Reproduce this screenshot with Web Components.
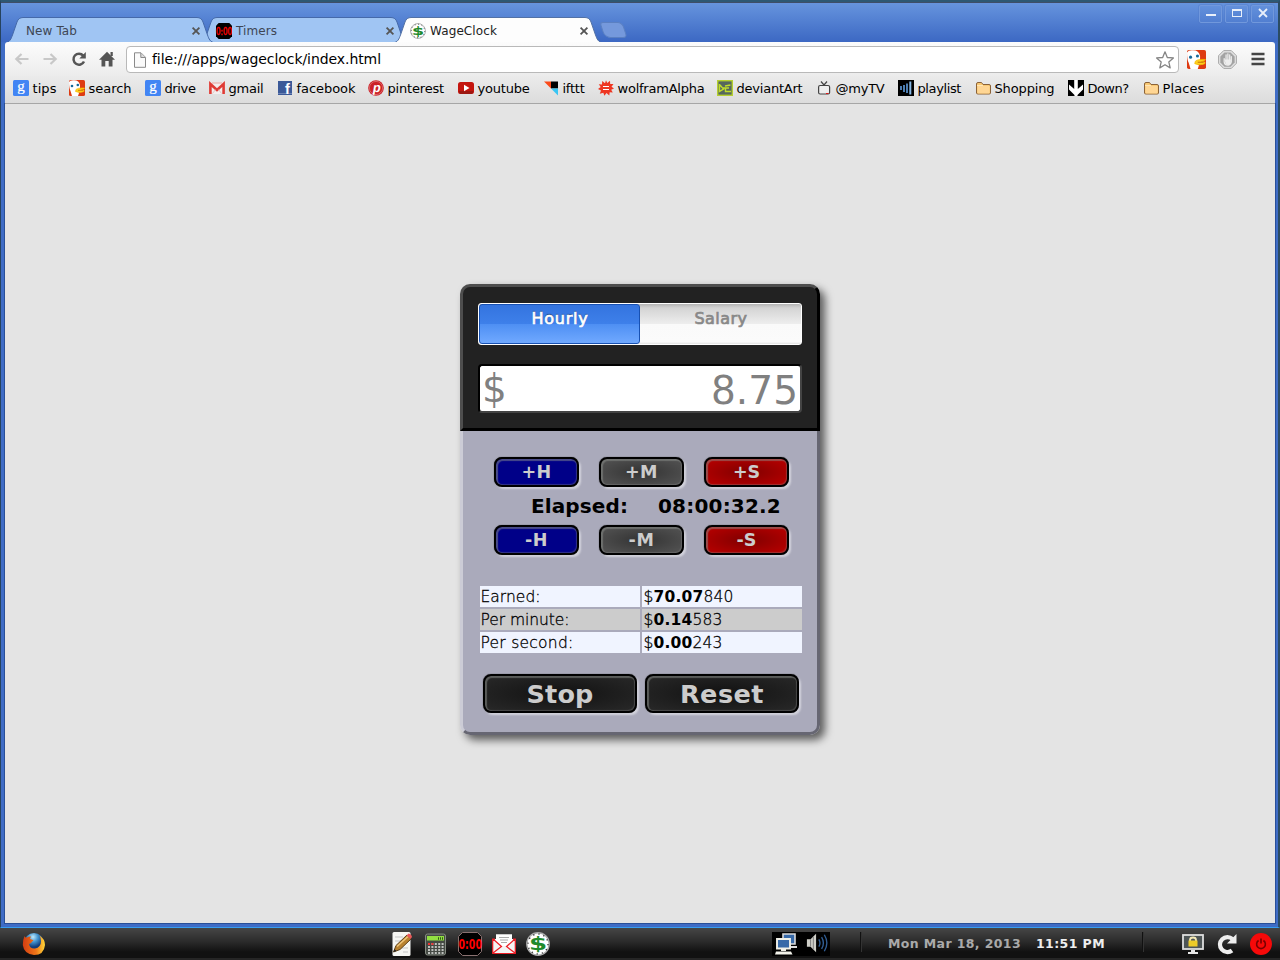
<!DOCTYPE html>
<html lang="en">
<head>
<meta charset="utf-8">
<title>WageClock</title>
<style>
html,body{margin:0;padding:0}
body{width:1280px;height:960px;overflow:hidden;background:#222;font-family:"DejaVu Sans",Verdana,sans-serif;color:#000}
</style>
</head>
<body>
<desk-top></desk-top>
<script>
const define = (name, html, setup) => customElements.define(name, class extends HTMLElement {
  constructor() {
    super();
    const t = document.createElement('template');
    t.innerHTML = html;
    this.attachShadow({mode: 'open'}).append(t.content.cloneNode(true));
  }
  connectedCallback() { if (setup) setup.call(this, this.shadowRoot); }
});

const clockIcon = `<circle cx="12" cy="12" r="11.2" fill="#fff" stroke="#aaa" stroke-width="1.4"/><circle cx="12" cy="12" r="10" fill="none" stroke="#222" stroke-width="1.2" stroke-dasharray="1.3 3.936"/><text x="12" y="18.500" transform="translate(-5.400 0) scale(1.45 1)" font-family="DejaVu Sans" font-size="18" font-weight="bold" text-anchor="middle" fill="#1f8a2c">$</text>`;
const google = `<rect width="16" height="16" rx="1.500" fill="#4285f4"/><text x="8" y="11.300" font-family="Liberation Serif" font-size="15" text-anchor="middle" fill="#fff" stroke="#fff" stroke-width=".2">g</text>`;
const folder = `<path d="M1.500 13V4Q1.500 2.500 3 2.500H6.500L8 4.500H14Q15.500 4.500 15.500 6V13Q15.500 14 14 14H3Q1.500 14 1.500 13Z" fill="#f9c973" stroke="#8b6239"/><path d="M2.500 6H14.500V13.500H2.500Z" fill="#ffd694"/><path d="M2 5.500H8" stroke="#ffe6b8"/>`;
const duck = `<rect width="16" height="16" rx="1.500" fill="#de3b12"/><path d="M0 2Q1 .3 4 .3Q10 -.3 11 5L11 8L9 11L10 13L9 16H3L1.500 11Q0 8 0 2Z" fill="#fff"/><circle cx="3" cy="6" r="1.300" fill="#14699a"/><circle cx="8.800" cy="5" r="1.300" fill="#14699a"/><path d="M7 9.500Q9 7.500 15.500 8Q16 9 12 9.700Q16 9.500 15 11.500Q11 13.500 6.500 11.500Z" fill="#ffd21e" stroke="#f4b400" stroke-width=".6"/><path d="M9 10.300H14" stroke="#b85a00" stroke-width=".7"/>`;
const icons = {
  google, folder, duck,
  wage: ['24', clockIcon],
  timer: ['24', `<path d="M4 0H20L24 4V20L20 24H4L0 20V4Z" fill="#000"/><text x="0" y="17.500" font-family="DejaVu Sans Condensed" font-size="15" textLength="24" lengthAdjust="spacingAndGlyphs" fill="#f00" stroke="#f00" stroke-width=".6">0:00</text>`],
  timerBig: ['24', `<path d="M4.500 .5H19.500L23.500 4.500V19.500L19.500 23.500H4.500L.5 19.500V4.500Z" fill="#000" stroke="#887070"/><text x=".5" y="17.200" font-family="DejaVu Sans Condensed" font-size="14" textLength="23.500" lengthAdjust="spacingAndGlyphs" fill="#f00">0:00</text>`],
  back: `<path d="M14.500 8H2.500M7.500 3L2.300 8L7.500 13" fill="none" stroke="#c8c8c8" stroke-width="2.200"/>`,
  fwd: `<path d="M1.500 8H13.500M8.500 3L13.700 8L8.500 13" fill="none" stroke="#c8c8c8" stroke-width="2.200"/>`,
  reload: `<path d="M12.200 4.600A5.500 5.500 0 1 0 13 10.500" fill="none" stroke="#555" stroke-width="2.500"/><path d="M14.800 1V7.500H8.300Z" fill="#555"/>`,
  home: `<path d="M8 .7L16 8.800H13.500V15.500H9.700V10H6.300V15.500H2.500V8.800H0Z" fill="#555"/><path d="M11.500 1H13.800V5H11.500Z" fill="#555"/>`,
  page: `<path d="M2.500 .8H9L13.500 5.300V15.300H2.500Z" fill="#fafafa" stroke="#8a8a8a"/><path d="M8.800 1V5.500H13.300" fill="#ddd" stroke="#8a8a8a"/>`,
  star: ['20', `<path d="M10 1.800L12.300 7.500L18.400 7.900L13.800 11.900L15.200 17.900L10 14.700L4.800 17.900L6.200 11.900L1.600 7.900L7.700 7.500Z" fill="#fff" stroke="#858585" stroke-width="1.300" stroke-linejoin="round"/>`],
  hand: ['20', `<path d="M6 .6H14L19.400 6V14L14 19.400H6L.6 14V6Z" fill="#e0e0e0" stroke="#a5a5a5"/><path d="M6.800 2.500H13.200L17.500 6.800V13.200L13.200 17.500H6.800L2.500 13.200V6.800Z" fill="#a3a3a3"/><path d="M6.500 9V12.500Q7 16 10.500 16Q13 16 14 12.500V7M8.500 11V5M10.400 11V4M12.300 11V5" stroke="#eee" stroke-width="1.300" fill="none" stroke-linecap="round"/><path d="M7 10H13.500V14L11 16L8 15Z" fill="#eee"/>`],
  menu: `<path d="M1.500 3H14.500M1.500 8H14.500M1.500 13H14.500" stroke="#454545" stroke-width="2.600"/>`,
  mail: `<rect x="0" y="2.500" width="16" height="11.500" fill="#f3eeee"/><path d="M1.400 14V4L8 10L14.600 4V14" fill="none" stroke="#df3b35" stroke-width="2.600"/><path d="M3 3H13" stroke="#e7a4a0"/><path d="M3.500 13.500L6.500 9.500M12.500 13.500L9.500 9.500" stroke="#d9b5b2" stroke-width=".7"/>`,
  facebook: `<rect x="1" y="1" width="14" height="14" fill="#3b5998"/><path d="M1 13H15V14H1Z" fill="#6d84b4"/><text x="8" y="14" font-family="Liberation Sans" font-weight="bold" font-size="14.500" fill="#fff">f</text>`,
  pinterest: `<circle cx="8" cy="8" r="7.800" fill="#cb2027"/><circle cx="8" cy="8" r="6.600" fill="none" stroke="#e9a0a2" stroke-width=".5"/><text x="8.800" y="11.500" transform="skewX(-10)" font-family="Liberation Sans" font-weight="bold" font-size="13" fill="#fff" dx="-2.500">p</text>`,
  youtube: `<rect x="0" y="2" width="16" height="12" rx="2.500" fill="#c4150e"/><path d="M1 11H15V12.500Q14.500 14 13 14H3Q1 14 1 12Z" fill="#9d1711"/><path d="M6 4.800L11.500 8L6 11.200Z" fill="#fff"/>`,
  ifttt: `<path d="M1 1.500H8V8.500Z" fill="#fb4a1a"/><path d="M8 1.500H15V8.500H8Z" fill="#000"/><path d="M8 8.500H15V15.500Z" fill="#39c5f3"/>`,
  wolfram: `<path d="M8 .2L9.300 3L12 .8L12.200 4L15.500 4L13.500 6.700L16 8.500L13.200 9.700L14.800 12.500L11.700 12.200L11.300 15.500L8.500 13L6.400 15.800L5.300 12.700L1.800 13.800L3 10.500L0 9L2.700 7L.8 4.200L4 4.500L4.200 1L7 3.200Z" fill="#ee3622"/><path d="M5 6.500H11M5 9.500H11" stroke="#fff"/>`,
  deviant: `<rect x=".7" y=".7" width="14.600" height="14.600" fill="#56675d" stroke="#b5cf30" stroke-width="1.400"/><path d="M2.500 4V11.500L6.500 9L3 5M6 8H12M8 6L13.500 5M8.500 8V11.500H14" fill="none" stroke="#c0dc2c" stroke-width="1.400"/>`,
  tv: `<path d="M5 1.500L8 5L11 1.500" fill="none" stroke="#444" stroke-width="1.200"/><rect x="2.600" y="5.500" width="11" height="8.500" rx="1.500" fill="#eee" stroke="#444" stroke-width="1.200"/><path d="M10 13.500H12.500" stroke="#e01818"/>`,
  playlist: `<rect width="16" height="16" fill="#000"/><path d="M3 6V10M6 5V12M9 3.500V13" stroke="#568bc4" stroke-width="1.800"/><path d="M12.300 1.500V14.500" stroke="#86b8e7" stroke-width="2"/>`,
  down: `<rect width="16" height="16" fill="#000"/><path d="M6.200 0H9.800V9L15 4.500V9.500L9.500 15V16H6.500V15L1 9.500V4.500L6.200 9Z" fill="#fff"/>`,
  firefox: ['24', `<defs><radialGradient id="b" cx=".45" cy=".2"><stop stop-color="#bfe9fb"/><stop offset=".5" stop-color="#4294d0"/><stop offset="1" stop-color="#123d7c"/></radialGradient><linearGradient id="o" x1="0" x2="1"><stop stop-color="#d33d12"/><stop offset=".6" stop-color="#ef7618"/><stop offset="1" stop-color="#ffd83a"/></linearGradient></defs><circle cx="12" cy="11" r="10" fill="url(#b)"/><path d="M2.500 4Q3 6 5 5.500Q7 4 9 4.500L8 7Q11 7.500 11.500 8.500Q10 9 9 11L7 12Q8 17 13 16.500Q19 15.500 19 9Q19 6 17.500 3.500Q23 7 23 13Q22 23 12 23Q2 22 .8 13Q.7 8 2.500 4Z" fill="url(#o)"/>`],
  note: ['24', `<rect x="2.500" y="0" width="18" height="24" rx="1.500" fill="#f6f6f3"/><path d="M5 5H13M5 9H12M11 16H18M13 20H18" stroke="#c5c5c5"/><path d="M3.500 20L6 13.500L17 3L21 7L10 17.500Z" fill="#b9822f" stroke="#5b3f18"/><path d="M7 14.500L18 4.500" stroke="#f0c67b" stroke-width="1.500"/><path d="M16.500 3.500L18.500 1.500Q21.500 2 22 5L20.500 7Z" fill="#e85959"/><path d="M3.500 20L4.500 17L6.500 19Z" fill="#222"/>`],
  calc: ['24', `<rect x="1.500" y="2" width="20" height="21" rx="2" fill="#454a44" stroke="#858b82"/><rect x="3" y="4" width="17" height="4.500" fill="#92df41"/><path d="M14 6.500H19" stroke="#315c17" stroke-width="2.500" stroke-dasharray="1 1"/><path d="M4 12H20M4 15H20M4 18H20M4 21H20" stroke="#bfc1be" stroke-width="1.800" stroke-dasharray="2 1.400"/><path d="M4 12H10" stroke="#e33" stroke-width="1.800" stroke-dasharray="2 1.400"/>`],
  letter: ['24', `<path d="M.7 7H4V2.500H20V7H23.300V21.500H.7Z" fill="#f4f4f4"/><path d="M4 2.500H20V10L15 14H9L4 10Z" fill="#fff"/><path d="M7 5.500H17M8 8H16M9 10.500H15" stroke="#aaa"/><path d="M3 7H.7V21.500H23.300V7H21M1 7L9.500 14.500L1 21M23 7L14.500 14.500L23 21" fill="none" stroke="#ed1c24" stroke-width="1.200"/>`],
  net: ['24', `<path d="M9 2H21V12H9Z" fill="#3769a8" stroke="#dadada" stroke-width="1.600"/><path d="M15 14H23V16H15Z" fill="#ddd"/><path d="M3 7H16V16.500H3Z" fill="#3769a8" stroke="#f0f0e8" stroke-width="1.900"/><path d="M7 17H12V19H7ZM2 19.500H17L18.500 22.500H1Z" fill="#f2f2ea"/>`],
  sound: ['24', `<path d="M1 8H5L11 2V22L5 16H1Z" fill="#cfcfc8"/><path d="M5 8V16M8 5V19" stroke="#777"/><path d="M14 8Q16.500 12 14 16M17 5.500Q21 12 17 18.500M20 3Q25.500 12 20 21" fill="none" stroke="#315e94" stroke-width="1.500"/>`],
  lock: ['24', `<rect x="2" y="3" width="20" height="14" fill="#4e5556" stroke="#dedede" stroke-width="1.800"/><path d="M10 18H14V20H17V22H7V20H10Z" fill="#e7e7e7"/><path d="M9 10V8Q9 5.500 12 5.500Q15 5.500 15 8V10" fill="none" stroke="#f4e9b4" stroke-width="1.800"/><rect x="7.500" y="8.500" width="9" height="6" fill="#edcb28"/>`],
  restart: ['24', `<path d="M17.500 7A7.500 7.500 0 1 0 17 18.500" fill="none" stroke="#eee" stroke-width="4.200"/><path d="M21.500 2V11.500H12Z" fill="#eee"/>`],
  power: ['24', `<circle cx="12" cy="12" r="11" fill="#f60909"/><path d="M9.600 8.500A4.400 4.400 0 1 0 14.400 8.500M12 6.500V11.500" fill="none" stroke="#790000" stroke-width="1.600"/>`],
  x: `<path d="M4.600 4.600L11.400 11.400M11.400 4.600L4.600 11.400" stroke="#555" stroke-width="1.800"/>`,
  min: ['24', `<rect x="7" y="12" width="10" height="2" fill="#e8effa"/>`],
  max: ['24', `<rect x="7.500" y="7.500" width="9" height="7" fill="none" stroke="#e8effa"/><path d="M7 8H17" stroke="#e8effa" stroke-width="2"/>`],
  close: ['24', `<path d="M8 7L16 15M16 7L8 15" stroke="#e8effa" stroke-width="1.800"/>`]
};
define('app-icon', `<style>:host{display:block;flex:none;line-height:0}svg{display:block;overflow:visible}</style>`, function (root) {
  const d = icons[this.getAttribute('name')], s = this.getAttribute('size') || 16;
  const [box, art] = Array.isArray(d) ? d : ['16', d];
  const h = document.createElement('div');
  h.innerHTML = `<svg width="${s}" height="${s}" viewBox="0 0 ${box} ${box}">${art}</svg>`;
  root.append(h);
});

/* One line of text, tracked so that it fills the width in its "w" attribute. */
define('fit-text', `<style>:host{display:block;white-space:nowrap;flex:none}span{display:inline-block}</style><span><slot></slot></span>`, function (root) {
  const s = root.querySelector('span'), w = +this.getAttribute('w');
  const n = this.textContent.length, nat = s.getBoundingClientRect().width;
  if (w && nat) s.style.letterSpacing = ((w - nat) / n).toFixed(3) + 'px';
  this.style.width = w + 'px';
});

define('browser-tab', `<style>
:host{display:block;width:210px;height:25px;margin-right:-16px;position:relative;z-index:1;font-size:12px;color:#3e4654}
:host([z="0"]){z-index:0}:host([active]){z-index:2;color:#222}
svg{position:absolute;left:0;top:0}
path{fill:#a0c5f3;stroke:#4569a9}
:host([active]) path{fill:#fdfdfd;stroke:#5271a5}
.row{position:relative;display:flex;align-items:center;height:25px;padding:2px 11px 0 17px;box-sizing:border-box}
.t{flex:1;line-height:24px;padding-left:4px}
</style><svg width="210" height="25" style="overflow:hidden"><path d="M0 26C5 25 6 22 7.500 18L12 5Q13.500 .5 18 .5H192Q196.500 .5 198 5L202.500 18C204 22 205 25 210 26"/></svg>
<div class="row"><slot name="icon"></slot><div class="t"><slot></slot></div><app-icon name="x" size="16"></app-icon></div>`);

define('window-button', `<style>:host{display:flex;align-items:center;justify-content:center;width:23px;height:18px;box-sizing:border-box;border:1px solid #7198dc;border-radius:2px;box-shadow:0 0 0 1px #4d79c966;overflow:hidden}</style><slot></slot>`);

define('tab-strip', `<style>
:host{display:flex;height:39px;justify-content:space-between;background:linear-gradient(#6694de,#3c68c3);box-sizing:border-box}
.tabs{display:flex;padding:14px 0 0 0}
.new{width:21px;height:14px;border-radius:3px 5px 4px 6px;transform:skewX(18deg);background:#7599dc;border:1px solid #5b80c2;margin:5px 0 0 15px;align-self:flex-start}
.b{display:flex;gap:3px;padding:2px 4px 0 0}
</style><div class="tabs">
<browser-tab><fit-text w="51">New Tab</fit-text></browser-tab>
<browser-tab z="0"><app-icon slot="icon" name="timer"></app-icon><fit-text w="41">Timers</fit-text></browser-tab>
<browser-tab active><app-icon slot="icon" name="wage"></app-icon><fit-text w="67">WageClock</fit-text></browser-tab>
<div class="new"></div></div>
<div class="b"><window-button><app-icon name="min" size="24"></app-icon></window-button><window-button><app-icon name="max" size="24"></app-icon></window-button><window-button><app-icon name="close" size="24"></app-icon></window-button></div>`);

define('tool-bar', `<style>
:host{display:flex;align-items:center;height:34px;padding:0 9px 0 9px;box-sizing:border-box;background:linear-gradient(#fcfcfc,#ececec);border-radius:3px 3px 0 0}
.nav{display:flex;gap:12px;width:112px;flex:none}.nav :last-child{margin-left:1px}
.nav :nth-child(3){margin-left:1px;margin-right:-1px}
.url{display:flex;align-items:center;flex:1;height:27px;box-sizing:border-box;border:1px solid #b9b9b9;border-radius:4px;background:#fff;padding:0 3px 0 5px;font-size:14px}
.url fit-text{margin-left:4px;line-height:24px}.url .s{margin-left:auto}
.url app-icon{margin-top:1px}
.ext{display:flex;align-items:center;margin-left:8px}
</style><div class="nav"><app-icon name="back"></app-icon><app-icon name="fwd"></app-icon><app-icon name="reload"></app-icon><app-icon name="home"></app-icon></div>
<div class="url"><app-icon name="page"></app-icon><fit-text w="229">file:///apps/wageclock/index.html</fit-text><app-icon class="s" name="star" size="20"></app-icon></div>
<div class="ext"><app-icon name="duck" size="19"></app-icon><app-icon name="hand" size="19" style="margin-left:12px"></app-icon><app-icon name="menu" size="16" style="margin-left:13px"></app-icon></div>`);

define('book-mark', `<style>:host{display:flex;align-items:center;flex:none;font-size:13px;line-height:16px;gap:3.500px}::slotted(fit-text){padding-top:1px}</style><slot name="icon"></slot><slot></slot>`);

const marks = [['google','tips',24,13],['duck','search',43,69],['google','drive',31,145],['mail','gmail',35,209],['facebook','facebook',59,277],['pinterest','pinterest',56.500,368],['youtube','youtube',52,458],['ifttt','ifttt',22,543],['wolfram','wolframAlpha',87,598],['deviant','deviantArt',66,717],['tv','@myTV',49,816],['playlist','playlist',43.500,898],['folder','Shopping',60,975],['down','Down?',41,1068],['folder','Places',42,1143]];
define('bookmark-bar', `<style>:host{display:flex;align-items:center;height:28px;padding-left:8px;box-sizing:border-box;background:linear-gradient(#ebebeb,#dcdcdc);border-bottom:1px solid #a6a6a6;padding-bottom:3px}</style>` +
  marks.map((m, i) => `<book-mark style="width:${i < marks.length - 1 ? marks[i + 1][3] - m[3] : 70}px"><app-icon slot="icon" name="${m[0]}"></app-icon><fit-text w="${m[2]}">${m[1]}</fit-text></book-mark>`).join(''));

define('push-button', `<style>
:host{display:block;width:85px;height:30px}
button{display:flex;justify-content:center;align-items:center;width:100%;height:100%;box-sizing:border-box;padding:0 0 1px;border:2px solid #000;border-radius:8px;font:bold 17.500px/24px "DejaVu Sans",sans-serif;color:#ccc;background:radial-gradient(ellipse at center,#333,#555);box-shadow:inset 1px 1px 1px 1px #8a8f8a88,inset -1px -1px 1px #8885,2px 2px 2px #dddde5cc,0 0 1px #222}
:host([tone=blue]) button{background:#000088}
:host([tone=red]) button{background:radial-gradient(ellipse at center,#800000,#bb0000)}
:host([tone=dark]) button{background:radial-gradient(ellipse at center,#111,#292929);font-size:25.500px;line-height:34px;padding:1px 0 0}
:host([tone=dark]){width:154px;height:39px}
</style><button><slot></slot></button>`);

define('mode-toggle', `<style>
:host{display:flex;height:42px;box-sizing:border-box;border:1px solid #fff;border-radius:3px;background:linear-gradient(#b5b5b5,#d4d4d4 4px,#eee 20px,#fafafa 20px,#fbfbfb 38px,#e2e2e2);font-size:16px;font-weight:normal;-webkit-text-stroke:.7px;line-height:30px;color:#888}
div{flex:0 0 50%;box-sizing:border-box;display:flex;justify-content:center;padding-left:1px}
.on{border:1px solid #1751b3;border-radius:3px;background:linear-gradient(#3474df,#3e80ea 50%,#4e8ff3 50%,#70a9ff);color:#fff;text-shadow:0 -1px 1px #0008;line-height:28px}
</style><div class="on"><fit-text w="57">Hourly</fit-text></div><div><fit-text w="53">Salary</fit-text></div>`);

define('money-input', `<style>:host{display:flex;justify-content:space-between;height:49px;box-sizing:border-box;border:2px solid;border-color:#000 #444 #444 #000;border-radius:4px;background:#fff;color:#808080;font-size:39px;line-height:50px;padding:0 2px 0 2px}.d{line-height:46px}</style><span class="d">$</span><fit-text w="87">8.75</fit-text>`);

define('rate-table', `<style>
:host{display:grid;grid-template-columns:160px 160px;gap:2px;font-family:"DejaVu Sans Light","DejaVu Sans";font-size:15.500px;line-height:23px}
div{height:21px;padding-left:.5px;background:#f0f4ff;box-sizing:border-box;display:flex;font-weight:200;-webkit-text-stroke:.3px}
.g{background:#ccc}.v{padding-left:1.500px}
b{font-family:"DejaVu Sans";font-weight:bold;-webkit-text-stroke:0}
</style><div><fit-text w="60">Earned:</fit-text></div><div class="v"><fit-text w="90">$<b>70.07</b>840</fit-text></div>
<div class="g"><fit-text w="89">Per minute:</fit-text></div><div class="g v"><fit-text w="79">$<b>0.14</b>583</fit-text></div>
<div><fit-text w="93">Per second:</fit-text></div><div class="v"><fit-text w="79">$<b>0.00</b>243</fit-text></div>`);

define('wage-clock', `<style>
:host{display:block;width:360px;height:451px;border-radius:10px;box-shadow:5px 5px 8px #0009}
header{height:147px;box-sizing:border-box;border:3px solid;border-color:#4e4e4e #000 #000 #4e4e4e;border-radius:10px 10px 0 0;background:#222;padding:16px 15px 0}
money-input{margin-top:19px}
main{height:304px;box-sizing:border-box;border:3px solid;border-top:0;border-color:#666672 #666672 #666672 #ccccd6;border-radius:0 0 10px 10px;background:#aaaabb;padding:26px 17px 0 17px}
.r{display:flex;gap:20px;padding-left:14px}
.e{display:flex;gap:30px;height:38px;padding-left:51px;font-size:20px;font-weight:bold;line-height:39px}
rate-table{margin-top:31px}
.a{display:flex;gap:8px;padding:21px 0 0 3px}
</style><header><mode-toggle></mode-toggle><money-input></money-input></header>
<main><div class="r"><push-button tone="blue"><fit-text w="30">+H</fit-text></push-button><push-button><fit-text w="33">+M</fit-text></push-button><push-button tone="red"><fit-text w="27">+S</fit-text></push-button></div>
<div class="e"><fit-text w="97">Elapsed:</fit-text><fit-text w="123">08:00:32.2</fit-text></div>
<div class="r"><push-button tone="blue"><fit-text w="23">-H</fit-text></push-button><push-button><fit-text w="26">-M</fit-text></push-button><push-button tone="red"><fit-text w="20">-S</fit-text></push-button></div>
<rate-table></rate-table>
<div class="a"><push-button tone="dark"><fit-text w="67">Stop</fit-text></push-button><push-button tone="dark"><fit-text w="84">Reset</fit-text></push-button></div></main>`);

define('browser-window', `<style>
:host{display:flex;flex-direction:column;height:928px;box-sizing:border-box;border:solid;border-width:2px 2px 1px 1px;border-color:#2d5874 #2b4c64 #379df0 #26435e}
.f{flex:1;display:flex;flex-direction:column;background:#3f6cc5;border-top:1px solid #3f4e68;box-sizing:border-box;padding:0 3px 4px 4px}
tab-strip{margin:0 -3px 0 -4px;padding-left:4px}
.p{flex:1;background:#e4e4e4;display:flex;justify-content:center;align-items:flex-start;padding-top:180px;box-shadow:0 0 0 1px #294f98}
tool-bar,bookmark-bar{position:relative}
</style><div class="f"><tab-strip></tab-strip><tool-bar></tool-bar><bookmark-bar></bookmark-bar><div class="p"><wage-clock></wage-clock></div></div>`);

define('task-bar', `<style>
:host{display:flex;height:32px;box-sizing:border-box;align-items:center;border-bottom:2px solid #252525;background:linear-gradient(#464646,#2b2b2b 45%,#111 80%,#111);font-size:12.500px;font-weight:bold;padding-top:1px}
.l{margin-left:22px;width:368px}.m{display:flex;gap:10px;width:382px;flex:none}
.t{display:flex;width:58px;height:24px;gap:8px;background:#000;flex:none;padding-left:2px;box-sizing:border-box;margin-right:30px}
i{width:1px;height:20px;background:#333;border-left:1px solid #111;flex:none;margin-top:-3px}
.d{color:#aaa;margin-left:26px;margin-top:-1px}.h{color:#eee;margin-left:15px;margin-right:37px;margin-top:-1px}
.e{display:flex;gap:10px;margin-left:37px}
</style><app-icon class="l" name="firefox" size="24"></app-icon>
<div class="m"><app-icon name="note" size="24"></app-icon><app-icon name="calc" size="24"></app-icon><app-icon name="timerBig" size="24"></app-icon><app-icon name="letter" size="24"></app-icon><app-icon name="wage" size="24"></app-icon></div>
<div class="t"><app-icon name="net" size="24"></app-icon><app-icon name="sound" size="22"></app-icon></div><i></i>
<fit-text class="d" w="133">Mon Mar 18, 2013</fit-text><fit-text class="h" w="69">11:51 PM</fit-text><i></i>
<div class="e"><app-icon name="lock" size="24"></app-icon><app-icon name="restart" size="24"></app-icon><app-icon name="power" size="24"></app-icon></div>`);

define('desk-top', `<style>:host{display:block;width:1280px;height:960px}</style><browser-window></browser-window><task-bar></task-bar>`);
</script>
</body>
</html>
